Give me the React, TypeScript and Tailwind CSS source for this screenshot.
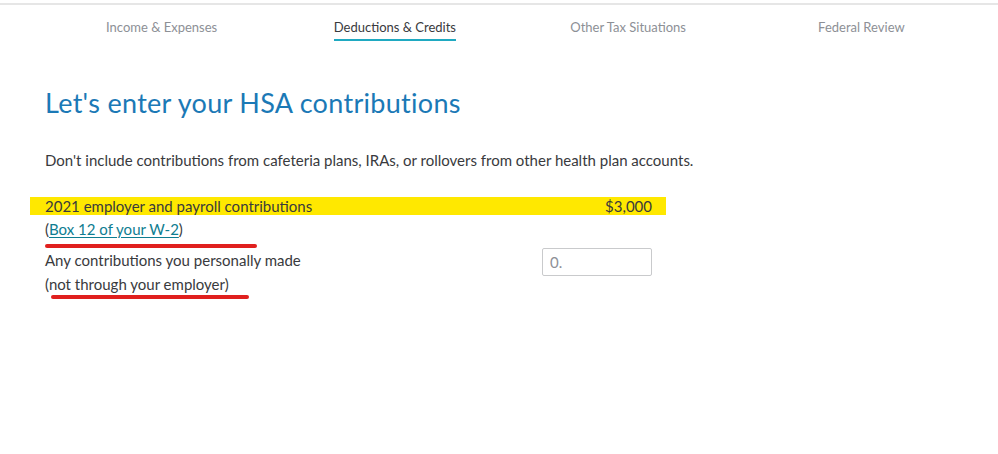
import React from 'react';

const tabs = ['Income & Expenses', 'Deductions & Credits', 'Other Tax Situations', 'Federal Review'];

export default function App() {
  return (
    <div className="w-[998px] h-[454px] bg-white overflow-hidden text-[#393a3d]" style={{ fontFamily: 'Lato, "Open Sans", sans-serif' }}>
      {/* top rule */}
      <div className="mt-[3px] h-[2px] bg-[#e6e6e6]" />

      {/* step tabs */}
      <nav className="grid grid-cols-4 pl-[45px] pr-[20px] pt-[13px]">
        {tabs.map((t, i) => (
          <div key={t} className="flex justify-center">
            <span
              className={
                i === 1
                  ? 'text-[13px] leading-[18px] text-[#393a3d] pb-[3px] border-b-2 border-[#1fa9c1]'
                  : 'text-[13px] leading-[18px] text-[#8d9096] pb-[3px]'
              }
            >
              {t}
            </span>
          </div>
        ))}
      </nav>

      <main className="pl-[45px] pt-[46px]">
        <h1 className="text-[27px] leading-[32px] text-[#1b79b6] tracking-[0.3px]">Let's enter your HSA contributions</h1>
        <p className="mt-[31px] text-[15px] leading-[20px]">
          Don't include contributions from cafeteria plans, IRAs, or rollovers from other health plan accounts.
        </p>

        <div className="relative mt-[27px] w-[607px] text-[15px]">
          {/* highlighted row */}
          <div className="-ml-[15px] pl-[15px] pr-[14px] w-[636px] h-[18px] bg-[#ffe800] flex items-center justify-between">
            <span>2021 employer and payroll contributions</span>
            <span>$3,000</span>
          </div>
          <div className="mt-[2px] leading-[24px]">
            (<a href="#" className="text-[#0e7d91] underline underline-offset-2">Box 12 of your W-2</a>)
          </div>

          <div className="mt-[7px] flex justify-between">
            <div className="leading-[24px]">
              <div>Any contributions you personally made</div>
              <div>(not through your employer)</div>
            </div>
            <div className="w-[110px] h-[28px] border border-[#c9cacc] rounded-[2px] flex items-center px-[7px] text-[#8d9096]">
              0.
            </div>
          </div>

          {/* red annotation strokes */}
          <div className="absolute left-0 top-[47px] w-[212px] h-[4px] rounded-full bg-[#e0201e]" />
          <div className="absolute left-[6px] top-[98px] w-[198px] h-[4px] rounded-full bg-[#e0201e]" />
        </div>
      </main>
    </div>
  );
}
